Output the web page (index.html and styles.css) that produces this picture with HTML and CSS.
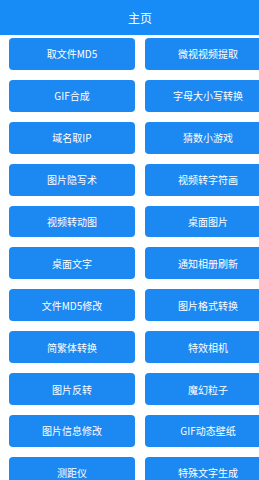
FILE: index.html
```html
<!DOCTYPE html>
<html lang="zh-CN">
<head>
    <meta charset="UTF-8">
    <meta name="viewport" content="width=device-width, initial-scale=1.0">
    <title>主页</title>
    <link rel="stylesheet" href="styles.css">
</head>
<body>
    <div class="screen">
        <div class="page">
            <div class="header">主页</div>

            <div class="grid">
                <div class="item">取文件MD5</div>
                <div class="item">微视视频提取</div>
                <div class="item">GIF合成</div>
                <div class="item">字母大小写转换</div>
                <div class="item">域名取IP</div>
                <div class="item">猜数小游戏</div>
                <div class="item">图片隐写术</div>
                <div class="item">视频转字符画</div>
                <div class="item">视频转动图</div>
                <div class="item">桌面图片</div>
                <div class="item">桌面文字</div>
                <div class="item">通知相册刷新</div>
                <div class="item">文件MD5修改</div>
                <div class="item">图片格式转换</div>
                <div class="item">简繁体转换</div>
                <div class="item">特效相机</div>
                <div class="item">图片反转</div>
                <div class="item">魔幻粒子</div>
                <div class="item">图片信息修改</div>
                <div class="item">GIF动态壁纸</div>
                <div class="item">测距仪</div>
                <div class="item">特殊文字生成</div>
            </div>
        </div>
    </div>
</body>
</html>
```

FILE: styles.css
```css
body {
    margin: 0;
    background: #fff;
    font-family: "Noto Sans CJK SC", "Noto Sans", sans-serif;
    color: #fff;
}
/* the screen is narrower than the page, right column is cut off */
.screen {
    width: 259px;
    height: 480px;
    overflow: hidden;
}
.page {
    width: 280px;
}
.header {
    height: 35px;
    line-height: 35px;
    text-align: center;
    font-size: 12px;
    background: #178bf6;
}
.grid {
    display: grid;
    grid-template-columns: 126px 126px;
    column-gap: 10px;
    row-gap: 10px;
    padding: 3px 9px 0;
}
.item {
    height: 31.9px;
    display: flex;
    align-items: center;
    justify-content: center;
    font-size: 10px;
    background: #1c88f2;
    border-radius: 4px;
}
```
